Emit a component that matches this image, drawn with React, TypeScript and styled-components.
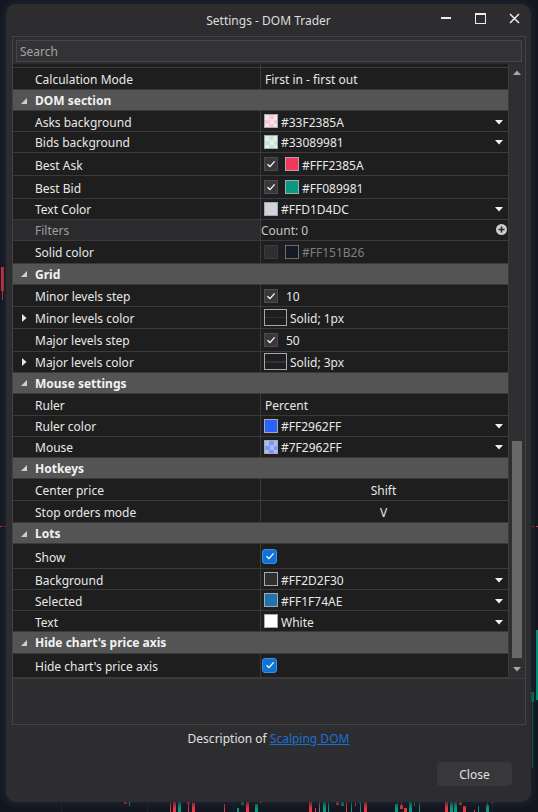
import React, { useLayoutEffect, useRef } from "react";
import styled, { createGlobalStyle } from "styled-components";

const GlobalStyle = createGlobalStyle`
  html, body {
    margin: 0;
    padding: 0;
    background: #131722;
  }
  body {
    font-family: "Noto Sans", "Open Sans", sans-serif;
    font-size: 12px;
    color: #e6e6e6;
  }
  * {
    box-sizing: border-box;
  }
`;

// ---------- data ----------

type Value =
  | { t: "text"; text: string }
  | { t: "center"; text: string }
  | { t: "color"; fill: string; text: string }
  | { t: "checkColor"; fill: string; text: string; disabled?: boolean }
  | { t: "checkText"; text: string }
  | { t: "line"; text: string; thick: number }
  | { t: "blueCheck" }
  | { t: "count"; text: string };

type RowData =
  | { kind: "header"; label: string }
  | {
      kind: "prop";
      label: string;
      value: Value;
      h?: number;
      expander?: boolean;
      muted?: boolean;
    };

const checker = (a: string, b: string) =>
  `repeating-conic-gradient(${a} 0 25%, ${b} 0 50%) 0 0 / 9px 9px`;

const rows: RowData[] = [
  // scrolled out of view, only its bottom edge shows
  { kind: "prop", label: "", h: 21, value: { t: "text", text: "" } },
  { kind: "prop", label: "Calculation Mode", h: 22, value: { t: "text", text: "First in - first out" } },
  { kind: "header", label: "DOM section" },
  { kind: "prop", label: "Asks background", h: 20.6, value: { t: "color", fill: checker("#f7cbd3", "#fde3e7"), text: "#33F2385A" } },
  { kind: "prop", label: "Bids background", h: 21, value: { t: "color", fill: checker("#c5e6de", "#e1f2ed"), text: "#33089981" } },
  { kind: "prop", label: "Best Ask", h: 23.4, value: { t: "checkColor", fill: "#f2385a", text: "#FFF2385A" } },
  { kind: "prop", label: "Best Bid", h: 22.6, value: { t: "checkColor", fill: "#089981", text: "#FF089981" } },
  { kind: "prop", label: "Text Color", h: 20.7, value: { t: "color", fill: "#d1d4dc", text: "#FFD1D4DC" } },
  { kind: "prop", label: "Filters", h: 21.7, muted: true, value: { t: "count", text: "Count: 0" } },
  { kind: "prop", label: "Solid color", h: 22.3, value: { t: "checkColor", fill: "#151b26", text: "#FF151B26", disabled: true } },
  { kind: "header", label: "Grid" },
  { kind: "prop", label: "Minor levels step", h: 22.6, value: { t: "checkText", text: "10" } },
  { kind: "prop", label: "Minor levels color", h: 21.4, expander: true, value: { t: "line", text: "Solid; 1px", thick: 1 } },
  { kind: "prop", label: "Major levels step", h: 23, value: { t: "checkText", text: "50" } },
  { kind: "prop", label: "Major levels color", h: 21, expander: true, value: { t: "line", text: "Solid; 3px", thick: 2 } },
  { kind: "header", label: "Mouse settings" },
  { kind: "prop", label: "Ruler", h: 21.6, value: { t: "text", text: "Percent" } },
  { kind: "prop", label: "Ruler color", h: 21.4, value: { t: "color", fill: "#2962ff", text: "#FF2962FF" } },
  { kind: "prop", label: "Mouse", h: 20.6, value: { t: "color", fill: checker("#7d99f3", "#a6bcfd"), text: "#7F2962FF" } },
  { kind: "header", label: "Hotkeys" },
  { kind: "prop", label: "Center price", h: 22.4, value: { t: "center", text: "Shift" } },
  { kind: "prop", label: "Stop orders mode", h: 21.6, value: { t: "center", text: "V" } },
  { kind: "header", label: "Lots" },
  { kind: "prop", label: "Show", h: 24.6, value: { t: "blueCheck" } },
  { kind: "prop", label: "Background", h: 21.4, value: { t: "color", fill: "#2d2f30", text: "#FF2D2F30" } },
  { kind: "prop", label: "Selected", h: 21, value: { t: "color", fill: "#1f74ae", text: "#FF1F74AE" } },
  { kind: "prop", label: "Text", h: 21, value: { t: "color", fill: "#ffffff", text: "White" } },
  { kind: "header", label: "Hide chart's price axis" },
  { kind: "prop", label: "Hide chart's price axis", h: 24.7, value: { t: "blueCheck" } },
];

// candles behind the dialog: [x, width, top, bottom, colour]
const RED = "#f23645";
const TEAL = "#089981";
const candles: [number, number, number, number, string][] = [
  [124, 3, 800, 804, RED], [128, 3, 800, 803, TEAL], [129, 1, 803, 806, TEAL],
  [170, 1, 800, 812, RED], [173, 3, 800, 812, RED], [178, 3, 800, 812, TEAL],
  [187, 3, 800, 804, RED], [188, 1, 804, 812, RED], [192, 3, 803, 812, RED], [192, 1, 800, 803, RED],
  [224, 1, 804, 812, RED],
  [237, 2, 808, 812, TEAL], [241, 3, 800, 805, TEAL], [246, 3, 800, 812, RED],
  [255, 3, 804, 812, TEAL], [259, 3, 800, 803, TEAL],
  [309, 3, 800, 812, RED], [315, 1, 808, 812, RED], [319, 1, 800, 812, "#787b86"],
  [323, 3, 800, 812, TEAL], [328, 1, 800, 812, TEAL],
  [336, 3, 800, 805, RED], [341, 3, 800, 806, TEAL], [346, 1, 800, 812, RED],
  [346, 3, 800, 801, RED], [351, 1, 800, 812, TEAL], [355, 1, 800, 806, RED],
  [355, 3, 800, 801, RED], [359, 3, 800, 803, TEAL], [360, 1, 803, 812, TEAL], [364, 3, 800, 812, RED],
  [395, 3, 804, 812, TEAL], [397, 1, 801, 804, TEAL], [400, 3, 805, 809, RED], [401, 1, 800, 805, RED],
  [404, 3, 808, 812, RED], [409, 3, 800, 812, TEAL], [414, 1, 800, 806, TEAL], [419, 1, 800, 812, TEAL],
  [445, 3, 800, 812, RED], [450, 3, 800, 812, TEAL], [454, 3, 800, 812, TEAL],
  [459, 3, 800, 805, RED], [463, 3, 806, 812, RED], [474, 1, 810, 812, RED],
  [478, 1, 806, 812, TEAL], [486, 3, 805, 812, TEAL], [487, 1, 800, 805, TEAL], [491, 3, 800, 803, TEAL],
  [1, 3, 267, 291, RED], [2, 1, 291, 300, RED], [6, 1, 287, 289, TEAL],
  [536, 2, 630, 700, TEAL], [531, 3, 692, 702, TEAL], [532, 1, 702, 768, TEAL],
];

// ---------- chart background ----------

const Page = styled.div`
  position: relative;
  width: 538px;
  height: 812px;
  overflow: hidden;
  padding: 4px 7px 0 6px;
`;

const ChartLayer = styled.svg`
  position: absolute;
  left: 0;
  top: 0;
`;

const Chart = () => (
  <ChartLayer width={538} height={812} viewBox="0 0 538 812">
    {[61, 147, 233, 319, 405, 492].map((x) => (
      <line key={x} x1={x + 0.5} x2={x + 0.5} y1={0} y2={812} stroke="#1e222d" />
    ))}
    <line x1={0} x2={538} y1={526.5} y2={526.5} stroke={RED} strokeDasharray="2 2" />
    {candles.map(([x, w, y1, y2, c], i) => (
      <rect key={i} x={x} y={y1} width={w} height={y2 - y1} fill={c} />
    ))}
  </ChartLayer>
);

// ---------- dialog ----------

const Dialog = styled.div`
  position: relative;
  width: 525px;
  height: 798px;
  background: #2d2d30;
  border-radius: 10px;
  display: flex;
  flex-direction: column;
  box-shadow: 0 0 6px 2px rgba(32, 36, 48, 0.95);
`;

const TitleBar = styled.div`
  height: 32px;
  display: grid;
  grid-template-columns: 1fr auto 1fr;
  align-items: center;
`;

const Title = styled.div`
  grid-column: 2;
  color: #dedede;
  font-size: 12px;
`;

const WindowControls = styled.div`
  grid-column: 3;
  justify-self: end;
  display: flex;
  height: 100%;
`;

const ControlButton = styled.div`
  width: 34px;
  height: 100%;
  display: flex;
  align-items: center;
  justify-content: center;
  padding-bottom: 4px;
`;

const Frame = styled.div`
  margin: 0 5px 0 6px;
  height: 689px;
  border: 1px solid #434346;
  display: flex;
  flex-direction: column;
`;

const SearchBox = styled.div`
  margin: 3px 3px 0 3px;
  height: 22px;
  background: #333336;
  border: 1px solid #46464a;
  color: #a3a3a3;
  font-size: 12px;
  padding: 1px 0 0 3px;
  display: flex;
  align-items: center;
`;

const GridArea = styled.div`
  margin-top: 2px;
  height: 615px;
  display: flex;
  border-bottom: 1px solid #3c3c3f;
`;

const Viewport = styled.div`
  width: 495px;
  overflow: hidden;
  background: #1e1e1e;
`;

const Row = styled.div<{ $h: number }>`
  height: ${(p) => p.$h}px;
  display: grid;
  grid-template-columns: 247px 1px 247px;
  border-bottom: 1px solid #3a3a3c;
`;

const Divider = styled.div`
  background: #3a3a3c;
`;

const HeaderRow = styled.div`
  height: 21.3px;
  display: flex;
  align-items: center;
  background: #545454;
  border-bottom: 1px solid #3a3a3c;
  padding: 1px 0 0 8px;
  gap: 8px;
  font-weight: 700;
  color: #f2f2f2;
`;

const NameCell = styled.div<{ $muted?: boolean }>`
  display: flex;
  align-items: center;
  padding: 2px 0 0 22px;
  position: relative;
  background: ${(p) => (p.$muted ? "#2b2b2d" : "transparent")};
  color: ${(p) => (p.$muted ? "#9e9e9e" : "#e8e8e8")};
  white-space: nowrap;
`;

const Expander = styled.svg`
  position: absolute;
  left: 9px;
  top: 50%;
  margin-top: -4px;
`;

const ValueCell = styled.div<{ $center?: boolean; $pad?: number }>`
  display: flex;
  align-items: center;
  justify-content: ${(p) => (p.$center ? "center" : "flex-start")};
  padding-left: ${(p) => p.$pad ?? 3}px;
  padding-right: 5px;
  color: #e8e8e8;
  white-space: nowrap;
`;

const Swatch = styled.span<{ $fill: string; $dim?: boolean }>`
  width: 14px;
  height: 14px;
  flex: none;
  background: ${(p) => p.$fill};
  border: 1px solid ${(p) => (p.$dim ? "#6e6e70" : "#a9a9ab")};
`;

const LineSwatch = styled.span<{ $thick: number }>`
  width: 23px;
  height: 17px;
  flex: none;
  border: 1px solid #a9a9ab;
  display: flex;
  align-items: center;

  &::after {
    content: "";
    display: block;
    width: 100%;
    height: ${(p) => p.$thick}px;
    background: #2a3144;
  }
`;

const CheckBox = styled.span<{ $disabled?: boolean }>`
  width: 14px;
  height: 14px;
  flex: none;
  background: ${(p) => (p.$disabled ? "#2f2f31" : "#38383b")};
  border: 1px solid ${(p) => (p.$disabled ? "#3a3a3c" : "#4d4d50")};
  display: flex;
  align-items: center;
  justify-content: center;
`;

const BlueBox = styled.span`
  width: 15px;
  height: 15px;
  border-radius: 3px;
  background: #0f72d4;
  border: 1px solid #3b8fe6;
  display: flex;
  align-items: center;
  justify-content: center;
`;

const ValueText = styled.span<{ $gap: number; $dim?: boolean }>`
  margin-left: ${(p) => p.$gap}px;
  padding-top: 2px;
  color: ${(p) => (p.$dim ? "#7f7f82" : "#e8e8e8")};
`;

const CountText = styled.span`
  padding-top: 2px;
  color: #c6c6c6;
`;

const Caret = styled.svg`
  margin-left: auto;
  margin-top: 2px;
`;

const PlusIcon = styled.svg`
  margin-left: auto;
  margin-right: -4px;
`;

const Scrollbar = styled.div`
  width: 17px;
  border-left: 1px solid #3a3a3c;
  background: #2f2f32;
  display: flex;
  flex-direction: column;
  align-items: center;
`;

const ScrollArrow = styled.div`
  height: 17px;
  width: 100%;
  display: flex;
  align-items: center;
  justify-content: center;
`;

const Track = styled.div`
  flex: 1;
  width: 100%;
  display: flex;
  flex-direction: column;
  align-items: center;
  justify-content: flex-end;
  padding-bottom: 3px;
`;

const Thumb = styled.div`
  width: 10px;
  background: #686868;
`;

const Description = styled.div`
  margin-top: 5px;
  height: 16px;
  text-align: center;
  color: #e0e0e0;
  font-size: 12px;
`;

const Link = styled.a`
  color: #1c6fd1;
  text-decoration: underline;
`;

const ButtonRow = styled.div`
  margin-top: 16px;
  padding-right: 19px;
  display: flex;
  justify-content: flex-end;
`;

const CloseButton = styled.button`
  width: 75px;
  height: 24px;
  border: none;
  border-radius: 4px;
  background: #38383b;
  color: #e2e2e2;
  font-family: inherit;
  font-size: 12px;
  padding: 0;
`;

// ---------- small drawings ----------

const Check = () => (
  <svg width="10" height="10" viewBox="0 0 10 10">
    <polyline points="1.5,5.2 4,7.6 8.6,2.4" fill="none" stroke="#ffffff" strokeWidth="1.3" />
  </svg>
);

const DownCaret = () => (
  <Caret width="8" height="5" viewBox="0 0 8 5">
    <polygon points="0,0 8,0 4,4.5" fill="#f2f2f2" />
  </Caret>
);

const HeaderGlyph = () => (
  <svg width="6" height="6" viewBox="0 0 6 6">
    <polygon points="6,0 6,6 0,6" fill="#d0d0d0" />
  </svg>
);

const renderValue = (v: Value) => {
  switch (v.t) {
    case "text":
      return (
        <ValueCell $pad={4}>
          <ValueText $gap={0}>{v.text}</ValueText>
        </ValueCell>
      );
    case "center":
      return (
        <ValueCell $center>
          <ValueText $gap={0}>{v.text}</ValueText>
        </ValueCell>
      );
    case "color":
      return (
        <ValueCell>
          <Swatch $fill={v.fill} />
          <ValueText $gap={3}>{v.text}</ValueText>
          <DownCaret />
        </ValueCell>
      );
    case "checkColor":
      return (
        <ValueCell>
          <CheckBox $disabled={v.disabled}>{!v.disabled && <Check />}</CheckBox>
          <Swatch $fill={v.fill} $dim={v.disabled} style={{ marginLeft: 7 }} />
          <ValueText $gap={3} $dim={v.disabled}>
            {v.text}
          </ValueText>
        </ValueCell>
      );
    case "checkText":
      return (
        <ValueCell>
          <CheckBox>
            <Check />
          </CheckBox>
          <ValueText $gap={8}>{v.text}</ValueText>
        </ValueCell>
      );
    case "line":
      return (
        <ValueCell>
          <LineSwatch $thick={v.thick} />
          <ValueText $gap={3}>{v.text}</ValueText>
        </ValueCell>
      );
    case "blueCheck":
      return (
        <ValueCell $pad={1}>
          <BlueBox>
            <Check />
          </BlueBox>
        </ValueCell>
      );
    case "count":
      return (
        <ValueCell $pad={0}>
          <CountText>{v.text}</CountText>
          <PlusIcon width="11" height="11" viewBox="0 0 11 11">
            <circle cx="5.5" cy="5.5" r="5.5" fill="#cdcdcd" />
            <path d="M5.5 2.5v6M2.5 5.5h6" stroke="#2a2a2c" strokeWidth="1.6" />
          </PlusIcon>
        </ValueCell>
      );
  }
};

const PropertyGrid = () => {
  const ref = useRef<HTMLDivElement>(null);

  // the list is scrolled down to its end, leaving only the bottom of the first row
  useLayoutEffect(() => {
    if (ref.current) ref.current.scrollTop = 17;
  }, []);

  return (
    <GridArea>
      <Viewport ref={ref}>
        {rows.map((r, i) =>
          r.kind === "header" ? (
            <HeaderRow key={i}>
              <HeaderGlyph />
              {r.label}
            </HeaderRow>
          ) : (
            <Row key={i} $h={r.h ?? 21.4}>
              <NameCell $muted={r.muted}>
                {r.expander && (
                  <Expander width="5" height="8" viewBox="0 0 5 8">
                    <polygon points="0,0 4.5,4 0,8" fill="#e6e6e6" />
                  </Expander>
                )}
                {r.label}
              </NameCell>
              <Divider />
              {renderValue(r.value)}
            </Row>
          )
        )}
      </Viewport>
      <Scrollbar>
        <ScrollArrow>
          <svg width="8" height="5" viewBox="0 0 8 5">
            <polygon points="0,5 8,5 4,0.5" fill="#a8a8a8" />
          </svg>
        </ScrollArrow>
        <Track>
          <Thumb style={{ height: 217 }} />
        </Track>
        <ScrollArrow>
          <svg width="8" height="5" viewBox="0 0 8 5">
            <polygon points="0,0 8,0 4,4.5" fill="#a8a8a8" />
          </svg>
        </ScrollArrow>
      </Scrollbar>
    </GridArea>
  );
};

const App = () => (
  <>
    <GlobalStyle />
    <Page>
      <Chart />
      <Dialog>
        <TitleBar>
          <Title>Settings - DOM Trader</Title>
          <WindowControls>
            <ControlButton>
              <svg width="10" height="10" viewBox="0 0 10 10">
                <rect x="0" y="4" width="10" height="2" fill="#ececec" />
              </svg>
            </ControlButton>
            <ControlButton>
              <svg width="11" height="11" viewBox="0 0 11 11">
                <rect x="0.5" y="1" width="10" height="9.5" fill="none" stroke="#ececec" />
                <rect x="0" y="0" width="11" height="2" fill="#ececec" />
              </svg>
            </ControlButton>
            <ControlButton>
              <svg width="11" height="11" viewBox="0 0 11 11">
                <path d="M1 1l9 9M10 1l-9 9" stroke="#ececec" strokeWidth="1.5" />
              </svg>
            </ControlButton>
          </WindowControls>
        </TitleBar>
        <Frame>
          <SearchBox>Search</SearchBox>
          <PropertyGrid />
        </Frame>
        <Description>
          Description of <Link href="#">Scalping DOM</Link>
        </Description>
        <ButtonRow>
          <CloseButton>Close</CloseButton>
        </ButtonRow>
      </Dialog>
    </Page>
  </>
);

export default App;
